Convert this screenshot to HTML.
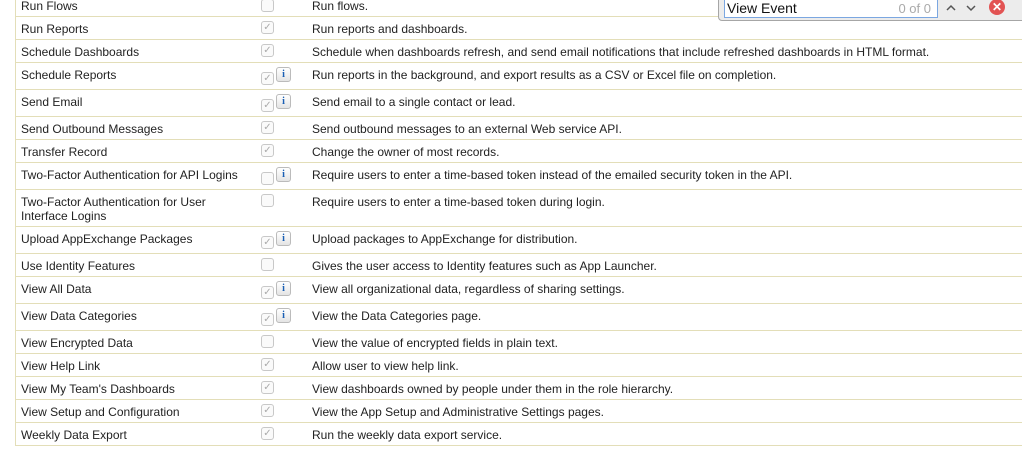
<!DOCTYPE html>
<html><head><style>
body{margin:0;width:1022px;height:462px;background:#fff;position:relative;overflow:hidden;font-family:"Liberation Sans",Arial,sans-serif;font-size:12px;color:#222}
.tbl{position:absolute;left:15px;top:-10px;width:1007px;border-left:1px solid #e3deb8;}
.r{position:relative;border-bottom:1px solid #e3deb8;}
.n{position:absolute;left:5px;top:5px;width:230px;line-height:14px}
.d{position:absolute;left:296px;top:5px;white-space:nowrap;line-height:14px}
.cb{position:absolute;left:245px;top:4px;width:11px;height:11px;border:1px solid #c8c8c8;border-radius:3px;background:#fafafa;color:#aaa;font-size:10px;line-height:11px;text-align:center}
.ib .cb{top:9px}
.ic{position:absolute;left:260px;top:4px;width:13px;height:13px;border:1px solid #bbb;border-radius:3px;background:linear-gradient(#fff,#e4e4e4);color:#1a5fb4;font-family:"Liberation Serif",serif;font-weight:bold;font-size:10px;line-height:13px;text-align:center}
.find{position:absolute;left:718px;top:-4px;width:310px;height:23px;background:#ececec;border:1px solid #a6a6a6;border-radius:4px}
.inp{position:absolute;left:5px;top:2px;width:212px;height:17px;background:#fff;border:1px solid #7ba7e1;font-size:14px;line-height:17px;color:#111}
</style></head><body>
<div class="tbl">
<div class="r" style="height:26px"><div class="n" style="top:9px">Run Flows</div><div class="cb" style="top:9px"></div><div class="d" style="top:9px">Run flows.</div></div>
<div class="r" style="height:22px"><div class="n">Run Reports</div><div class="cb">✓</div><div class="d">Run reports and dashboards.</div></div>
<div class="r" style="height:22px"><div class="n">Schedule Dashboards</div><div class="cb">✓</div><div class="d">Schedule when dashboards refresh, and send email notifications that include refreshed dashboards in HTML format.</div></div>
<div class="r ib" style="height:26px"><div class="n">Schedule Reports</div><div class="cb">✓</div><div class="ic">i</div><div class="d">Run reports in the background, and export results as a CSV or Excel file on completion.</div></div>
<div class="r ib" style="height:26px"><div class="n">Send Email</div><div class="cb">✓</div><div class="ic">i</div><div class="d">Send email to a single contact or lead.</div></div>
<div class="r" style="height:22px"><div class="n">Send Outbound Messages</div><div class="cb">✓</div><div class="d">Send outbound messages to an external Web service API.</div></div>
<div class="r" style="height:22px"><div class="n">Transfer Record</div><div class="cb">✓</div><div class="d">Change the owner of most records.</div></div>
<div class="r ib" style="height:26px"><div class="n">Two-Factor Authentication for API Logins</div><div class="cb"></div><div class="ic">i</div><div class="d">Require users to enter a time-based token instead of the emailed security token in the API.</div></div>
<div class="r" style="height:36px"><div class="n">Two-Factor Authentication for User Interface Logins</div><div class="cb"></div><div class="d">Require users to enter a time-based token during login.</div></div>
<div class="r ib" style="height:26px"><div class="n">Upload AppExchange Packages</div><div class="cb">✓</div><div class="ic">i</div><div class="d">Upload packages to AppExchange for distribution.</div></div>
<div class="r" style="height:22px"><div class="n">Use Identity Features</div><div class="cb"></div><div class="d">Gives the user access to Identity features such as App Launcher.</div></div>
<div class="r ib" style="height:26px"><div class="n">View All Data</div><div class="cb">✓</div><div class="ic">i</div><div class="d">View all organizational data, regardless of sharing settings.</div></div>
<div class="r ib" style="height:26px"><div class="n">View Data Categories</div><div class="cb">✓</div><div class="ic">i</div><div class="d">View the Data Categories page.</div></div>
<div class="r" style="height:22px"><div class="n">View Encrypted Data</div><div class="cb"></div><div class="d">View the value of encrypted fields in plain text.</div></div>
<div class="r" style="height:22px"><div class="n">View Help Link</div><div class="cb">✓</div><div class="d">Allow user to view help link.</div></div>
<div class="r" style="height:22px"><div class="n">View My Team's Dashboards</div><div class="cb">✓</div><div class="d">View dashboards owned by people under them in the role hierarchy.</div></div>
<div class="r" style="height:22px"><div class="n">View Setup and Configuration</div><div class="cb">✓</div><div class="d">View the App Setup and Administrative Settings pages.</div></div>
<div class="r" style="height:22px"><div class="n">Weekly Data Export</div><div class="cb">✓</div><div class="d">Run the weekly data export service.</div></div>
</div>
<div class="find">
<div class="inp"><span style="padding-left:2px">View Event</span><span style="position:absolute;right:6px;top:0;color:#aaa;font-size:13px">0 of 0</span></div>
<svg style="position:absolute;left:222px;top:3px" width="44" height="16"><path d="M6 10 L10 6 L14 10" stroke="#555" stroke-width="1.5" fill="none"/><path d="M26 6 L30 10 L34 6" stroke="#555" stroke-width="1.5" fill="none"/></svg>
<div style="position:absolute;left:270px;top:2px;width:16px;height:16px;border-radius:50%;background:#e25353;color:#fff;font-size:12px;line-height:16px;text-align:center;font-weight:bold">✕</div>
</div>
</body></html>
